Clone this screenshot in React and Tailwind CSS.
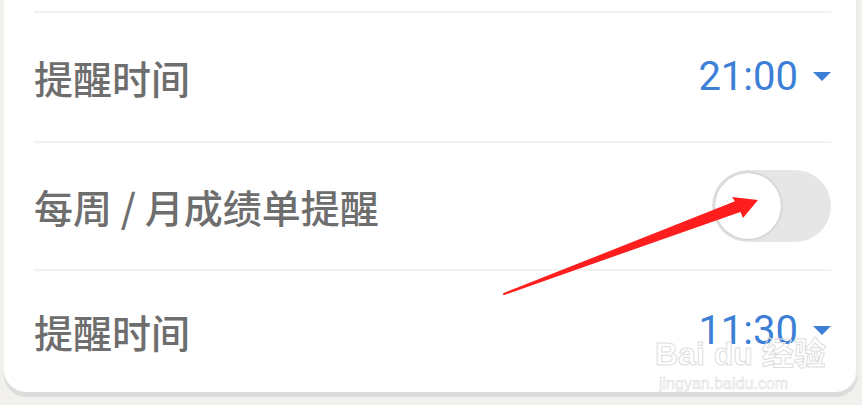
import { useState } from "react";

const Caret = () => (
  <svg width="18" height="10" viewBox="0 0 18 10" className="ml-[15px]">
    <path d="M0 0 L18 0 L9 9 Z" fill="#3d7fd6" />
  </svg>
);

const TimeRow = ({ label, time }) => (
  <div className="flex items-center justify-between h-[128px]">
    <span>{label}</span>
    <div className="flex items-center text-[#3d7fd6] text-[40px] font-normal" style={{ fontFamily: "Roboto, sans-serif" }}>
      <span>{time}</span>
      <Caret />
    </div>
  </div>
);

export default function App() {
  const [on, setOn] = useState(false);

  return (
    <div className="relative w-[862px] h-[405px] overflow-hidden bg-[#f1f0ec]">
      <div
        className="ml-[4px] w-[854px] h-[392px] bg-white rounded-b-[22px] border-r-2 border-[#ebebeb] shadow-[0_5px_0_#dcdcdc] pl-[30px] pr-[25px] text-[39px] font-medium text-[#6e6e6e]"
        style={{ fontFamily: '"Noto Sans CJK SC", "Noto Sans", sans-serif' }}
      >
        <div className="h-[13px] border-b-2 border-[#f2f2f2]" />
        <div className="border-b-2 border-[#f2f2f2]">
          <TimeRow label="提醒时间" time="21:00" />
        </div>
        <div className="flex items-center justify-between h-[128px] border-b-2 border-[#f2f2f2]">
          <span>每周 / 月成绩单提醒</span>
          <button
            onClick={() => setOn(!on)}
            className="relative w-[119px] h-[72px] rounded-full bg-[#e6e6e6]"
          >
            <span className="absolute left-[3px] top-[3px] w-[66px] h-[66px] rounded-full bg-white shadow-[0_0_3px_rgba(0,0,0,0.25)]" />
          </button>
        </div>
        <div className="-mt-[4px]">
          <TimeRow label="提醒时间" time="11:30" />
        </div>
      </div>

      <div
        className="absolute left-[655px] top-[338px] leading-none pointer-events-none"
        style={{ fontFamily: '"Liberation Sans", "Noto Sans CJK SC", sans-serif' }}
      >
        <div className="text-[32px] font-bold" style={{ WebkitTextStroke: "1px #dedede", color: "transparent" }}>Bai du 经验</div>
        <div className="text-[16px] mt-[6px] ml-[4px]" style={{ WebkitTextStroke: "0.6px #dedede", color: "transparent" }}>jingyan.baidu.com</div>
      </div>

      <svg className="absolute left-0 top-0 pointer-events-none" width="862" height="405">
        <path d="M504 294 L736 202 L740 211 Z" fill="#ff1e1e" stroke="#ff1e1e" strokeWidth="2" strokeLinejoin="round" />
        <path d="M758 200 L732 197 L738 206 L743 218 Z" fill="#ff1e1e" />
      </svg>
    </div>
  );
}
